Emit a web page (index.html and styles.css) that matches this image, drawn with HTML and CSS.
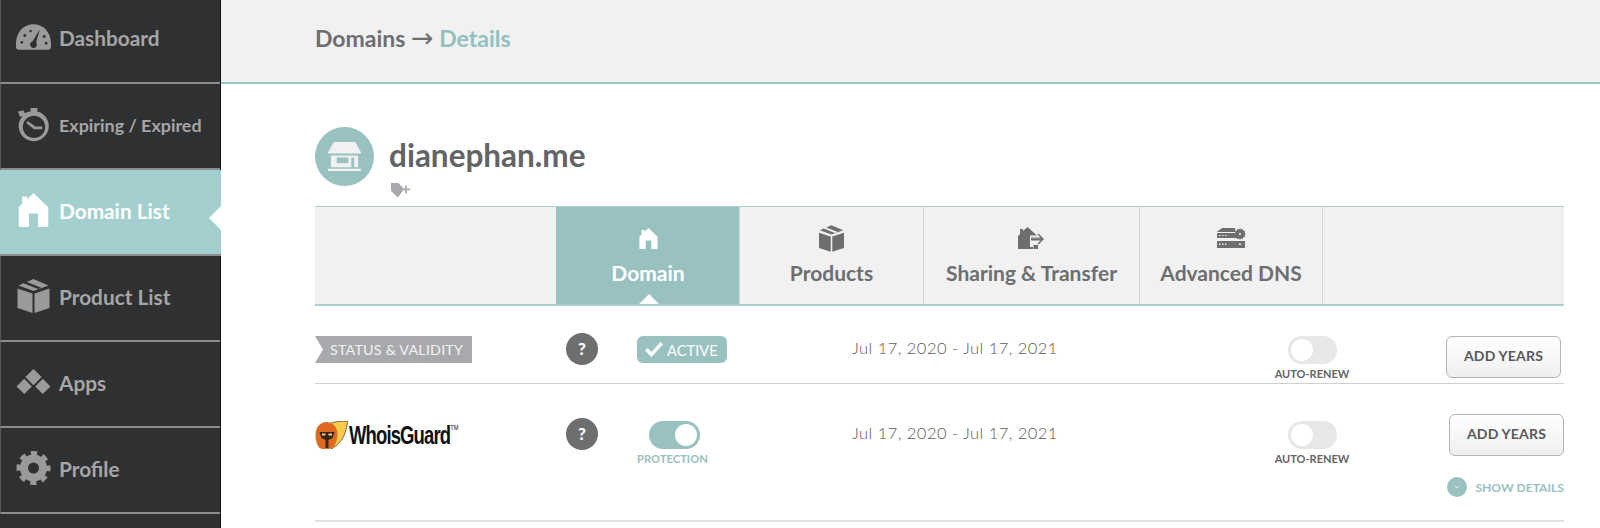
FILE: index.html
```html
<!DOCTYPE html>
<html lang="en">
<head>
<meta charset="utf-8">
<title>Domain Details</title>
<link rel="stylesheet" href="styles.css">
</head>
<body>
<svg class="defs" width="0" height="0" aria-hidden="true">
  <symbol id="house" viewBox="0 0 26 30">
    <path d="M13 0 L26 12.5 V30 H17 V18 H9 V30 H0 V12.5 L3 9.5 V3 H7.5 V5.5 Z"/>
  </symbol>
  <symbol id="box" viewBox="0 0 32 34">
    <path d="M0 9.5 L15 14.500 V34 L0 29 Z M32 9.5 L17 14.500 V34 L32 29 Z"/>
    <path d="M16 0 L31 6.500 L16 12 L1 6.500 L6 4.300 L20.500 10 L23.800 8.800 L9.300 3 Z"/>
  </symbol>
</svg>
<div class="page">
  <nav class="sidebar">
    <a class="nav-item">
      <svg class="nav-icon" viewBox="0 0 36 26"><path fill-rule="evenodd" d="M18 0C8 0 0 8 0 20v3a3 3 0 0 0 3 3h30a3 3 0 0 0 3-3v-3C36 8 28 0 18 0ZM24.500 5 20.700 18.500a3.500 3.500 0 1 1-3.600-1.100ZM6 17a1.500 1.500 0 1 0 .01 0ZM9 10a1.500 1.500 0 1 0 .01 0ZM15 5.500a1.300 1.300 0 1 0 .01 0ZM29 11a1.500 1.500 0 1 0 .01 0ZM31 18a1.500 1.500 0 1 0 .01 0Z"/></svg>
      <span>Dashboard</span>
    </a>
    <a class="nav-item small">
      <svg class="nav-icon" viewBox="0 0 32 35"><path fill-rule="evenodd" d="M13 0h7v3.600A15.500 15.500 0 1 1 4.800 8.200L2 9 0 3.500 6 2.500 7 5.500A15.500 15.500 0 0 1 13 3.700ZM16.500 8a11.500 11.500 0 1 0 .01 0ZM10 13.500l8 5.500h7v2.800h-8.500L8.500 15.500Z"/></svg>
      <span>Expiring / Expired</span>
    </a>
    <a class="nav-item active">
      <svg class="nav-icon house"><use href="#house"/></svg>
      <span>Domain List</span>
      <i class="nav-notch"></i>
    </a>
    <a class="nav-item">
      <svg class="nav-icon"><use href="#box"/></svg>
      <span>Product List</span>
    </a>
    <a class="nav-item">
      <svg class="nav-icon" viewBox="0 0 32 24"><path d="M16 0l7.500 7.500L16 15 8.500 7.500ZM7.500 9 14.500 16 7.500 23 .5 16ZM24.500 9 31.500 16 24.500 23 17.500 16Z"/></svg>
      <span>Apps</span>
    </a>
    <a class="nav-item">
      <svg class="nav-icon gear" viewBox="0 0 34 34">
        <circle class="gear-ring" cx="17" cy="17" r="9.500"/>
        <circle class="gear-teeth" cx="17" cy="17" r="14.500"/>
      </svg>
      <span>Profile</span>
    </a>
  </nav>

  <main class="main">
    <header class="topbar">
      <h1 class="crumbs">Domains <span class="arrow">→</span> <span class="crumb-current">Details</span></h1>
    </header>

    <section class="content">
      <div class="title-row">
        <div class="store-badge">
          <svg viewBox="0 0 34 30" class="store-icon"><path d="M6 0h22l6 10.500v1l-1.400 1-1.400-1-1.400 1-1.400-1-1.400 1-1.400-1-1.400 1-1.400-1-1.400 1-1.400-1-1.400 1-1.400-1-1.400 1-1.400-1-1.400 1-1.400-1-1.400 1-1.400-1-1.400 1-1.400-1-1.400 1-1.400-1-1.400 1-1.400-1-1.400 1L0 11.500v-1Z"/><path fill-rule="evenodd" d="M3 14h28v12H3ZM9 16v6h12v-6ZM24 16v10h3V16Z"/><path d="M0 27.500h34V30H0Z"/></svg>
        </div>
        <div class="title-text">
          <h2 class="domain-name">dianephan.me</h2>
          <svg class="tag-icon" viewBox="0 0 21 15"><path d="M1 0h7.500l5.500 6-6 8.500L1 8Z"/><path d="M15.200 2.500h1.800v3h3.200v1.800H17v3h-1.800v-3h-3V5.500h3Z"/></svg>
        </div>
      </div>

      <div class="tabs">
        <div class="tab-spacer"></div>
        <a class="tab tab-domain active">
          <svg class="tab-icon tab-house"><use href="#house"/></svg>
          <span>Domain</span>
          <i class="tab-notch"></i>
        </a>
        <a class="tab tab-products">
          <svg class="tab-icon tab-box"><use href="#box"/></svg>
          <span>Products</span>
        </a>
        <a class="tab tab-sharing">
          <svg class="tab-icon tab-share" viewBox="0 0 27 22"><path d="M9.500 0 19 8.500H12V20h3v2H0V9L2 7V2h3v2Z"/><path d="M13 10.500h9.500L19.500 7.500l1-1L26 12l-5.500 5.500-1-1 3-3H13V12h10v-.200H13Z"/><path d="M15.500 18h4.500v4h-4.500Z"/></svg>
          <span>Sharing &amp; Transfer</span>
        </a>
        <a class="tab tab-dns">
          <svg class="tab-icon tab-server" viewBox="0 0 29 20"><path fill-rule="evenodd" d="M5 0h13l.5 4H0v-.2ZM0 5h19.500a8 8 0 0 0 2 5H0ZM2 7v1h1.500V7ZM5 7v1h1.500V7ZM8 7v1h1.500V7ZM0 13h28v7H0ZM2 15.500v1.500h1.500v-1.500ZM5 15.500v1.500h1.500v-1.500ZM8 15.500v1.500h1.500v-1.500ZM22 15.500v1.500h2v-1.500Z"/><path fill-rule="evenodd" d="M23 0l1 1.500 1.800-.5.500 1.800 1.800.5-.5 1.800L29 6l-1.400 1 .5 1.800-1.800.5-.5 1.800-1.800-.5-1 1.400-1-1.400-1.800.5-.5-1.800-1.800-.5.500-1.800L17 6l1.400-1-.5-1.800 1.800-.5.500-1.800 1.800.5ZM23 5a1 1 0 1 0 .01 0Z"/></svg>
          <span>Advanced DNS</span>
        </a>
      </div>

      <div class="row row-status">
        <div class="cell-name"><span class="ribbon">STATUS &amp; VALIDITY</span></div>
        <div class="cell-help"><span class="help">?</span></div>
        <div class="cell-state">
          <span class="active-badge">
            <svg class="check" viewBox="0 0 18 15"><path d="M0 8.500 2.500 6 6.500 10 15.500 0 18 2.500 6.500 15Z"/></svg>
            ACTIVE
          </span>
        </div>
        <div class="cell-date">Jul 17, 2020 - Jul 17, 2021</div>
        <div class="cell-renew">
          <span class="toggle"><i class="knob"></i></span>
          <span class="renew-label">AUTO-RENEW</span>
        </div>
        <div class="cell-action"><button class="btn">ADD YEARS</button></div>
      </div>

      <div class="row row-guard">
        <div class="cell-name">
          <span class="guard-logo">
            <svg class="guard-icon" viewBox="0 0 32 28">
              <path d="M12 3C17 1 25 0 32 0 31 12 27 22 16 28Z" fill="#f8cc4a" stroke="#1a1a1a" stroke-width=".6"/>
              <path d="M11 1C5 1 0 6 0 14c0 6 2 11 4 13l3 1h7l5-3c2-4 3-9 3-12C22 6 17 1 11 1Z" fill="#de6a22"/>
              <path d="M4 11h15l-2 6-4 2v8h-3v-8l-4-2Z" fill="#3a2414"/>
              <path d="M6.500 12.500h3.500v2H6.500ZM13 12.500h3.500v2H13Z" fill="#f3c9a0"/>
            </svg>
            <span class="guard-text">WhoisGuard<sup class="tm">TM</sup></span>
          </span>
        </div>
        <div class="cell-help"><span class="help">?</span></div>
        <div class="cell-state">
          <div class="protection">
            <span class="toggle on"><i class="knob"></i></span>
            <span class="protect-label">PROTECTION</span>
          </div>
        </div>
        <div class="cell-date">Jul 17, 2020 - Jul 17, 2021</div>
        <div class="cell-renew">
          <span class="toggle"><i class="knob"></i></span>
          <span class="renew-label">AUTO-RENEW</span>
        </div>
        <div class="cell-action">
          <button class="btn">ADD YEARS</button>
          <a class="details">
            <span class="details-dot"><svg viewBox="0 0 8 5" class="chev"><path d="M.5.5 4 4 7.500.5" fill="none" stroke="#fff" stroke-width="1"/></svg></span>
            SHOW DETAILS
          </a>
        </div>
      </div>
    </section>
  </main>
</div>
</body>
</html>
```

FILE: styles.css
```css
* { box-sizing: border-box; }

html, body {
  margin: 0;
  height: 528px;
  overflow: hidden;
  background: #fff;
  font-family: Lato, "Open Sans", sans-serif;
}

.defs { position: absolute; }

.page {
  display: flex;
  height: 528px;
}

/* Sidebar */
.sidebar {
  width: 221px;
  flex: none;
  background: #2f3032;
  border-right: 1px solid #111;
  display: flex;
  flex-direction: column;
}

.nav-item {
  position: relative;
  flex: none;
  height: 86px;
  padding-left: 15px;
  padding-bottom: 4px;
  display: flex;
  align-items: center;
  gap: 8px;
  color: #a6a6a6;
  font-size: 20.800px;
  font-weight: 700;
  border-bottom: 2px solid #8c8d8e;
  border-left: 1px solid #555;
}

.nav-item:first-child { height: 84px; padding-bottom: 8px; }
.nav-item.small { font-size: 17.900px; padding-bottom: 2px; }

.nav-item.active {
  background: #a3d0ce;
  color: #fff;
  width: 221px;
  border-left: 0;
  padding-left: 16px;
}

.nav-icon {
  width: 35px;
  height: 34px;
  fill: #9a9a9a;
  flex: none;
}

.nav-item.active .nav-icon { fill: #fff; }

.gear circle { fill: none; stroke: #9a9a9a; }
.gear-ring { stroke-width: 8px; }
.gear-teeth { stroke-width: 5px; stroke-dasharray: 6.100 5.290; stroke-dashoffset: 3; }

.nav-notch {
  position: absolute;
  right: 0;
  top: 36px;
  border: 12px solid transparent;
  border-left: 0;
  border-right-color: #fff;
}

/* Top bar */
.main {
  flex: 1;
  min-width: 0;
}

.topbar {
  height: 84px;
  background: #f1f1f1;
  border-bottom: 2px solid #9ac8c6;
  padding: 23px 0 0 94px;
}

.crumbs {
  margin: 0;
  font-size: 23px;
  line-height: 30px;
  font-weight: 700;
  color: #6d6e70;
}

.arrow { font-weight: 400; font-family: "DejaVu Sans", sans-serif; font-size: 27px; line-height: 20px; }
.crumb-current { color: #93c0bf; }

/* Content */
.content { padding: 43px 36px 0 94px; }

.title-row {
  display: flex;
  gap: 15px;
  height: 79px;
}

.store-badge {
  width: 59px;
  height: 59px;
  border-radius: 50%;
  background: #99c1c0;
  display: flex;
  align-items: center;
  justify-content: center;
}

.store-icon { width: 33px; height: 31px; fill: #f1f1f1; }

.title-text {
  display: flex;
  flex-direction: column;
  align-items: flex-start;
}

.domain-name {
  margin: 8px 0 0;
  font-size: 31.500px;
  line-height: 40px;
  font-weight: 700;
  color: #636466;
}

.tag-icon {
  width: 21px;
  height: 15px;
  margin: 8px 0 0 1px;
  fill: #a7a9ac;
}

/* Tabs */
.tabs {
  display: flex;
  height: 100px;
  background: #f1f1f1;
  border-top: 1px solid #a9d0ce;
  border-bottom: 2px solid #a9d0ce;
}

.tab-spacer { width: 241px; }

.tab {
  position: relative;
  display: flex;
  flex-direction: column;
  align-items: center;
  border-left: 1px solid #d5d5d5;
  color: #6d6e70;
  font-size: 21px;
  font-weight: 700;
  line-height: 26px;
}

.tab span { position: absolute; top: 53px; white-space: nowrap; }

.tab-domain { width: 183px; }
.tab-products { width: 184px; }
.tab-sharing { width: 216px; }
.tab-dns { width: 184px; border-right: 1px solid #d5d5d5; }

.tab.active {
  background: #99c1c0;
  color: #fff;
  border-left-color: #99c1c0;
}

.tab-icon { fill: #6d6e70; margin-top: 20px; }
.tab-house { width: 19px; height: 21px; }
.tab-box { width: 25px; height: 27px; }
.tab-share { width: 27px; height: 22px; }
.tab-server { width: 29px; height: 20px; }
.tab-domain .tab-icon { fill: #fff; margin-top: 21px; }
.tab-products .tab-icon { margin-top: 18px; }
.tab-dns .tab-icon { margin-top: 21px; }

.tab-notch {
  position: absolute;
  left: 82px;
  bottom: 0;
  border: 10px solid transparent;
  border-top: 0;
  border-bottom-color: #fff;
}

/* Rows */
.row {
  display: grid;
  grid-template-columns: 241px 81px 215px 422px 76px 1fr;
  align-items: start;
  color: #58595b;
}

.row-status {
  height: 78px;
  padding-top: 27px;
  border-bottom: 1px solid #d0d0d0;
}

.row-guard {
  height: 138px;
  padding-top: 34px;
  border-bottom: 2px solid #e3e3e3;
}

.cell-name { margin-top: 3px; }
.cell-state { margin-top: 3px; }
.cell-date {
  font-size: 16.500px;
  line-height: 22px;
  font-weight: 300;
  letter-spacing: .47px;
  margin-top: 4px;
  white-space: nowrap;
}

.cell-renew {
  margin-top: 3px;
  display: flex;
  flex-direction: column;
  align-items: center;
}

.cell-action {
  display: flex;
  flex-direction: column;
  align-items: flex-end;
}

.ribbon {
  display: inline-block;
  height: 27px;
  width: 157px;
  padding-left: 15px;
  background: #a7a9ac;
  color: #f4f4f4;
  font-size: 14.300px;
  font-weight: 400;
  line-height: 27px;
  letter-spacing: .2px;
  white-space: nowrap;
  clip-path: polygon(0 0, 100% 0, 100% 100%, 0 100%, 8px 50%);
}

.help {
  display: block;
  margin-left: 10px;
  width: 32px;
  height: 32px;
  border-radius: 50%;
  background: #6d6e70;
  color: #fff;
  font-size: 17px;
  font-weight: 900;
  line-height: 32px;
  text-align: center;
}

.active-badge {
  display: inline-flex;
  align-items: center;
  gap: 4px;
  height: 27px;
  width: 90px;
  padding-left: 8px;
  border-radius: 6px;
  background: #99c1c0;
  color: #fff;
  font-size: 14.700px;
  font-weight: 400;
}

.check { width: 18px; height: 15px; fill: #fff; }

.toggle {
  display: flex;
  align-items: center;
  width: 49px;
  height: 28px;
  padding: 0 3px;
  border-radius: 14px;
  background: #e6e7e8;
}

.knob {
  display: block;
  width: 22px;
  height: 22px;
  border-radius: 50%;
  background: #fff;
}

.toggle.on {
  width: 51px;
  margin-left: 12px;
  background: #99c1c0;
  justify-content: flex-end;
}

.renew-label, .protect-label {
  margin-top: 3px;
  font-size: 11px;
  line-height: 14px;
  font-weight: 700;
  white-space: nowrap;
}

.renew-label { color: #636466; }
.protect-label { color: #99c1c0; font-size: 11.200px; }

.protection {
  display: inline-flex;
  flex-direction: column;
  align-items: flex-start;
}

.btn {
  width: 115px;
  height: 42px;
  padding: 0 0 3px;
  border: 1px solid #b4b4b4;
  border-radius: 6px;
  background: linear-gradient(#fff, #efefef);
  color: #58595b;
  font-family: inherit;
  font-size: 14px;
  font-weight: 700;
  letter-spacing: .2px;
}

.row-status .btn { margin: 3px 3px 0 0; }
.row-guard .btn { margin-top: -4px; }

.details {
  display: flex;
  align-items: center;
  gap: 8px;
  margin-top: 21px;
  color: #99c1c0;
  font-size: 12.100px;
  font-weight: 700;
  white-space: nowrap;
}

.details-dot {
  display: flex;
  align-items: center;
  justify-content: center;
  width: 20px;
  height: 20px;
  border-radius: 50%;
  background: #99c1c0;
}

.chev { width: 6px; height: 4px; }

/* WhoisGuard logo */
.guard-logo {
  display: flex;
  align-items: center;
  gap: 1px;
  height: 28px;
}

.guard-icon { width: 33px; height: 28px; flex: none; }

.guard-text {
  font-family: "Liberation Sans", Arial, sans-serif;
  font-size: 26px;
  font-weight: 700;
  letter-spacing: -1.200px;
  color: #111;
  white-space: nowrap;
  transform: scaleX(.71);
  transform-origin: left center;
}

.tm {
  font-size: 8px;
  letter-spacing: 0;
  font-weight: 400;
  vertical-align: 14px;
  line-height: 0;
}
```
